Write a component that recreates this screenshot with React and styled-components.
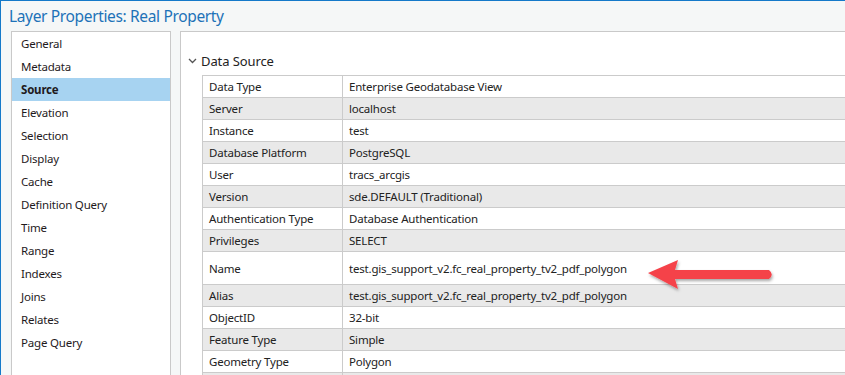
import React from "react";
import styled, { createGlobalStyle } from "styled-components";

const GlobalStyle = createGlobalStyle`
  html, body {
    margin: 0;
    padding: 0;
    overflow: hidden;
    background: #f5f7f7;
  }
  body {
    font-family: "Noto Sans", "Open Sans", sans-serif;
  }
`;

const Window = styled.div`
  width: 845px;
  height: 375px;
  box-sizing: border-box;
  border-top: 1px solid #1479c9;
  border-left: 1px solid #1479c9;
  background: #f5f7f7;
  display: flex;
  flex-direction: column;
  overflow: hidden;
  position: relative;
`;

const Title = styled.div`
  height: 30px;
  flex-shrink: 0;
  padding-left: 8px;
  font-size: 15.5px;
  line-height: 30px;
  color: #1d72b8;
  letter-spacing: -0.35px;
`;

const Body = styled.div`
  flex: 1;
  display: flex;
  gap: 9px;
  padding-left: 10px;
  min-height: 0;
`;

const Nav = styled.ul`
  list-style: none;
  margin: 0;
  padding: 0;
  width: 158px;
  flex-shrink: 0;
  background: #fff;
  border: 1px solid #c9c9c9;
  border-bottom: none;
`;

const NavItem = styled.li`
  height: 23px;
  line-height: 23px;
  padding-left: 9px;
  font-size: 11.5px;
  letter-spacing: -0.2px;
  color: #1f1a1c;
  background: ${(p) => (p.$active ? "#a7d3f1" : "transparent")};
  font-weight: ${(p) => (p.$active ? 700 : 400)};
`;

const Content = styled.div`
  width: 760px;
  flex-shrink: 0;
  background: #fff;
  border: 1px solid #c9c9c9;
  border-bottom: none;
  padding-top: 18px;
`;

const SectionHeader = styled.div`
  display: flex;
  align-items: center;
  height: 22px;
  padding-left: 7px;
  margin-bottom: 3px;
  font-size: 13px;
  letter-spacing: -0.1px;
  color: #222;
  gap: 4px;
`;

const Table = styled.table`
  margin-left: 21px;
  border-collapse: collapse;
  width: 700px;
  font-size: 11.5px;
  letter-spacing: -0.2px;
  color: #222;
`;

const Row = styled.tr`
  background: ${(p) => (p.$alt ? "#e9e9e9" : "#fff")};
  height: ${(p) => (p.$tall ? "33px" : "22px")};
`;

const Cell = styled.td`
  border: 1px solid #cbcbcb;
  padding: 0 6px;
  box-sizing: border-box;
  white-space: nowrap;
  vertical-align: middle;
  width: ${(p) => p.$w || "auto"};
`;

const Arrow = styled.svg`
  position: absolute;
  left: 640px;
  top: 252px;
  overflow: visible;
`;

const navItems = [
  "General",
  "Metadata",
  "Source",
  "Elevation",
  "Selection",
  "Display",
  "Cache",
  "Definition Query",
  "Time",
  "Range",
  "Indexes",
  "Joins",
  "Relates",
  "Page Query",
];

const rows = [
  ["Data Type", "Enterprise Geodatabase View"],
  ["Server", "localhost"],
  ["Instance", "test"],
  ["Database Platform", "PostgreSQL"],
  ["User", "tracs_arcgis"],
  ["Version", "sde.DEFAULT (Traditional)"],
  ["Authentication Type", "Database Authentication"],
  ["Privileges", "SELECT"],
  ["Name", "test.gis_support_v2.fc_real_property_tv2_pdf_polygon", true],
  ["Alias", "test.gis_support_v2.fc_real_property_tv2_pdf_polygon"],
  ["ObjectID", "32-bit"],
  ["Feature Type", "Simple"],
  ["Geometry Type", "Polygon"],
  ["", ""],
];

const App = () => {
  return (
    <>
      <GlobalStyle />
      <Window>
        <Title>Layer Properties: Real Property</Title>
        <Body>
          <Nav>
            {navItems.map((item) => (
              <NavItem key={item} $active={item === "Source"}>
                {item}
              </NavItem>
            ))}
          </Nav>
          <Content>
            <SectionHeader>
              <svg width="9" height="6" viewBox="0 0 9 6">
                <path d="M1 1 L4.5 4.5 L8 1" fill="none" stroke="#555" strokeWidth="1.3" />
              </svg>
              Data Source
            </SectionHeader>
            <Table>
              <tbody>
                {rows.map(([k, v, tall], i) => (
                  <Row key={i} $alt={i % 2 === 1} $tall={tall}>
                    <Cell $w="140px">{k}</Cell>
                    <Cell>{v}</Cell>
                  </Row>
                ))}
              </tbody>
            </Table>
          </Content>
        </Body>
        <Arrow width="140" height="40" viewBox="0 0 140 40">
          <defs>
            <filter id="sh" x="-20%" y="-40%" width="140%" height="180%">
              <feDropShadow dx="1" dy="2" stdDeviation="1.5" floodColor="#000" floodOpacity="0.35" />
            </filter>
          </defs>
          <g filter="url(#sh)">
            <path d="M7 20 L37 7 L34 17 L128 17 Q133.5 21.5 128 26 L34 26 L37 36 Z" fill="#f5424a" />
          </g>
        </Arrow>
      </Window>
    </>
  );
};

export default App;
